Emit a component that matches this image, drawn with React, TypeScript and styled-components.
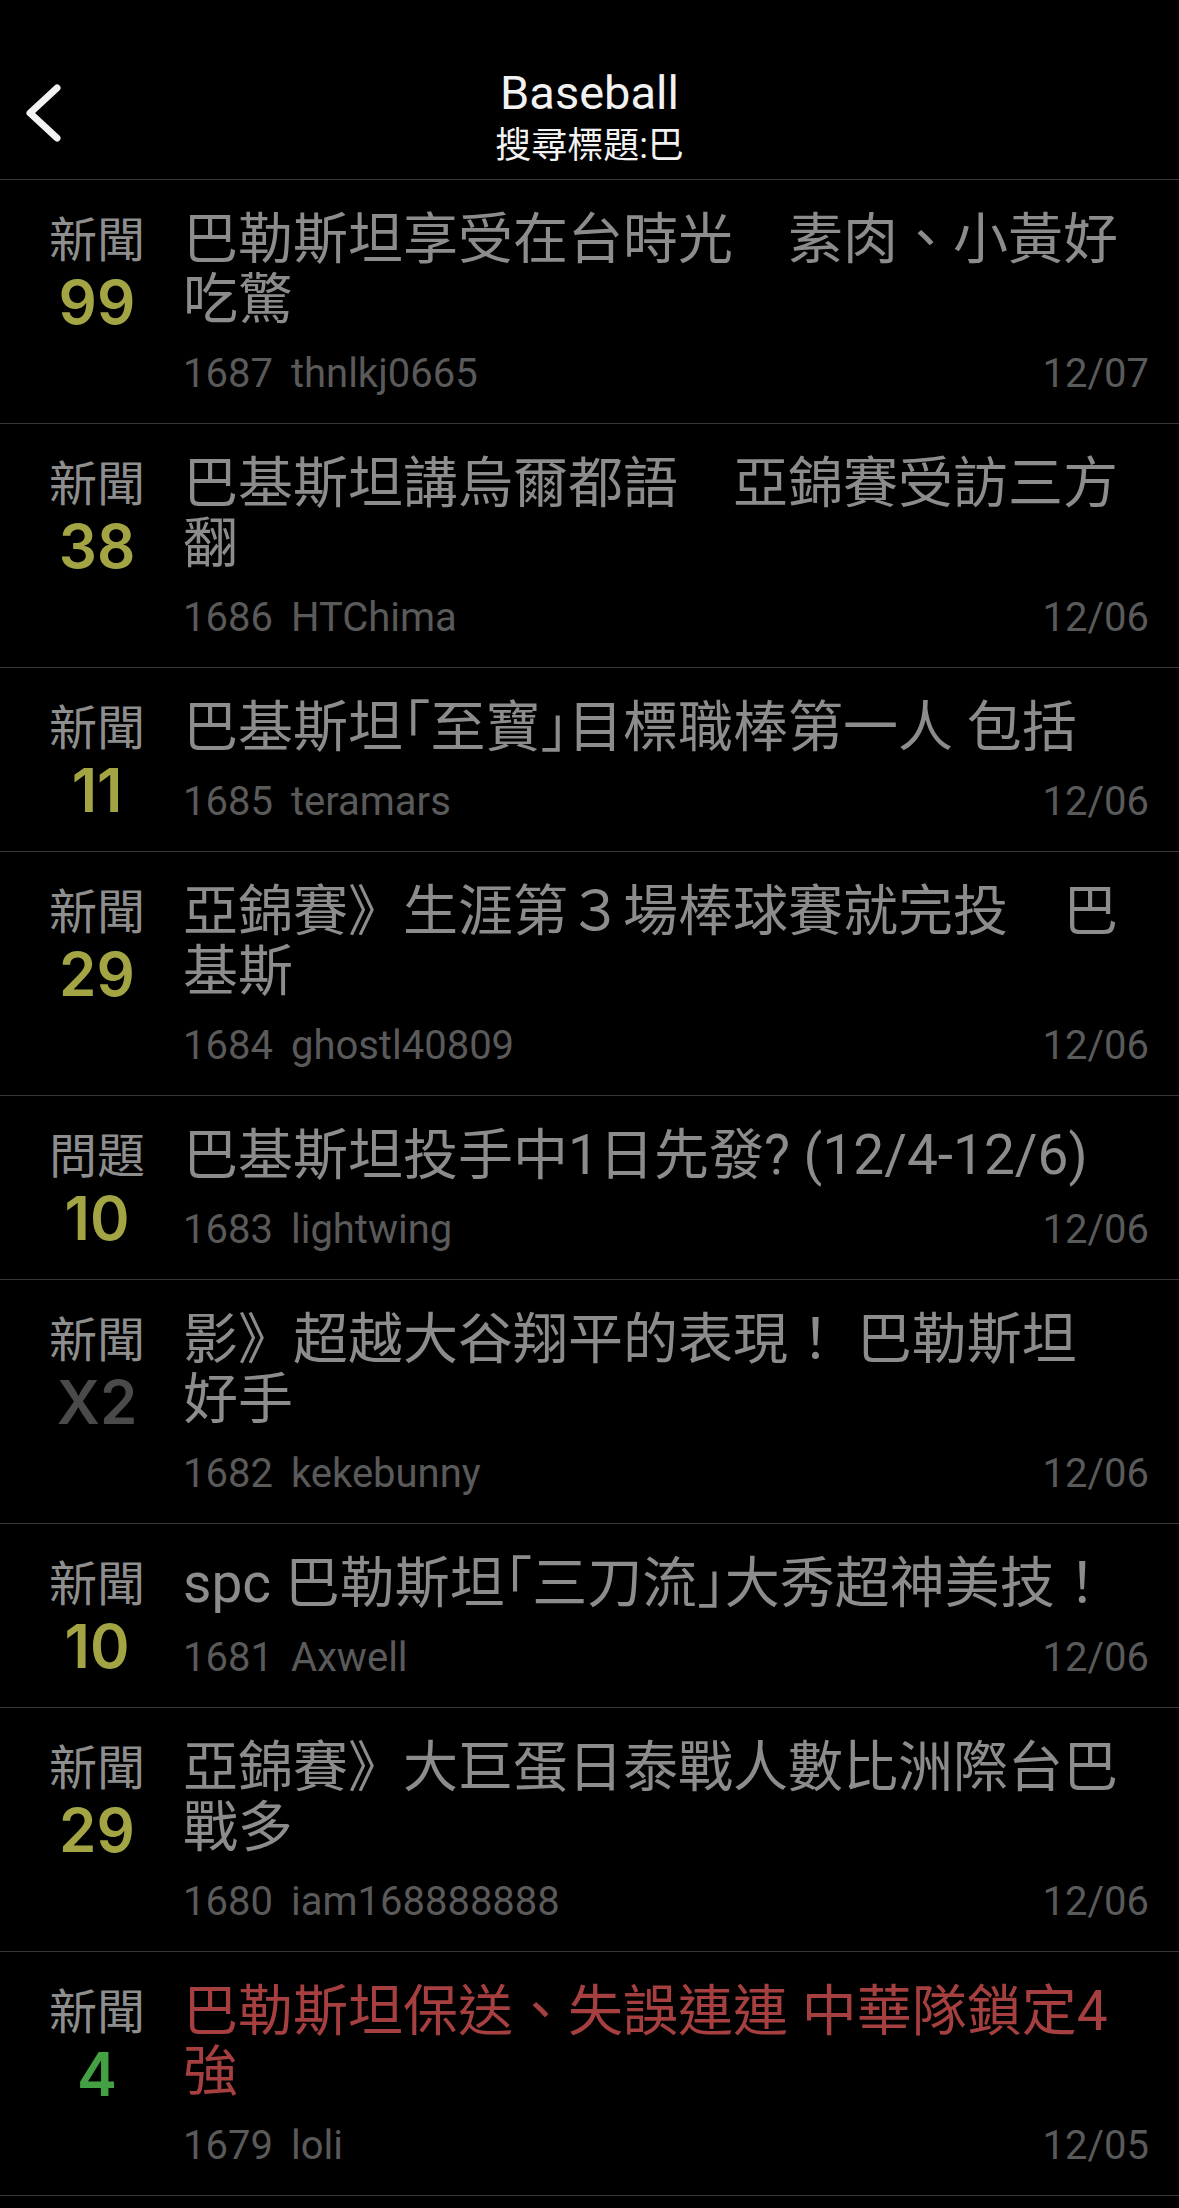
import React from "react";
import styled, { createGlobalStyle } from "styled-components";

const GlobalStyle = createGlobalStyle`
  html, body {
    margin: 0;
    padding: 0;
    background: #000;
  }
  body {
    font-family: Roboto, "Noto Sans CJK TC", sans-serif;
    -webkit-font-smoothing: antialiased;
  }
  #root {
    min-height: 2208px;
    background: #000;
  }
`;

const Page = styled.div`
  width: 1179px;
  min-height: 2208px;
  background: #000;
  overflow: hidden;
`;

const Header = styled.header`
  display: grid;
  grid-template-columns: 1fr auto 1fr;
  align-items: start;
  box-sizing: border-box;
  height: 180px;
  padding: 65px 22px 0 22px;
  border-bottom: 1px solid #363636;
`;

const BackButton = styled.button`
  justify-self: start;
  margin-top: 15px;
  padding: 0;
  border: none;
  background: none;
  width: 44px;
  height: 66px;
  display: flex;
`;

const TitleBlock = styled.div`
  display: flex;
  flex-direction: column;
  align-items: center;
  color: #f2f2f2;
`;

const BoardName = styled.div`
  font-size: 47px;
  line-height: 56px;
  font-weight: 400;
`;

const Subtitle = styled.div`
  margin-top: 3px;
  font-size: 36px;
  line-height: 44px;
`;

const Row = styled.div`
  display: flex;
  padding: 29px 30px 25px 40px;
  border-bottom: 1px solid #363636;
`;

const Side = styled.div`
  flex: none;
  width: 114px;
  margin-right: 29px;
  padding-top: 4px;
  display: flex;
  flex-direction: column;
  align-items: center;
`;

const Kind = styled.div`
  font-size: 48px;
  line-height: 56px;
  color: #8e8e8e;
  white-space: nowrap;
`;

type Tone = "yellow" | "green" | "dim";

const toneColor: Record<Tone, string> = {
  yellow: "#a3a443",
  green: "#43a043",
  dim: "#4a4a4a",
};

const Count = styled.div<{ $tone: Tone }>`
  font-family: Inter, Roboto, sans-serif;
  font-size: 60px;
  line-height: 66px;
  font-weight: 600;
  color: ${(p) => toneColor[p.$tone]};
`;

const Main = styled.div`
  flex: 1;
  min-width: 0;
  display: flex;
  flex-direction: column;
`;

const Title = styled.div<{ $hot?: boolean }>`
  font-size: 55px;
  line-height: 60px;
  padding-right: 24px;
  color: ${(p) => (p.$hot ? "#a63f3f" : "#8c8c8c")};
`;

const Punct = styled.span`
  font-feature-settings: "halt" 1;
`;

const Meta = styled.div`
  margin-top: 21px;
  display: flex;
  align-items: baseline;
  font-size: 40px;
  line-height: 48px;
  color: #5a5a5a;
  white-space: nowrap;
`;

const Author = styled.span`
  margin-left: 18px;
`;

const PostDate = styled.span`
  margin-left: auto;
`;

type Post = {
  kind: string;
  count: string;
  tone: Tone;
  title: string;
  no: string;
  author: string;
  date: string;
  hot?: boolean;
};

const posts: Post[] = [
  { kind: "新聞", count: "99", tone: "yellow", title: "巴勒斯坦享受在台時光　素肉、小黃好吃驚", no: "1687", author: "thnlkj0665", date: "12/07" },
  { kind: "新聞", count: "38", tone: "yellow", title: "巴基斯坦講烏爾都語　亞錦賽受訪三方翻", no: "1686", author: "HTChima", date: "12/06" },
  { kind: "新聞", count: "11", tone: "yellow", title: "巴基斯坦「至寶」目標職棒第一人 包括", no: "1685", author: "teramars", date: "12/06" },
  { kind: "新聞", count: "29", tone: "yellow", title: "亞錦賽》生涯第３場棒球賽就完投　巴基斯", no: "1684", author: "ghostl40809", date: "12/06" },
  { kind: "問題", count: "10", tone: "yellow", title: "巴基斯坦投手中1日先發? (12/4-12/6)", no: "1683", author: "lightwing", date: "12/06" },
  { kind: "新聞", count: "X2", tone: "dim", title: "影》超越大谷翔平的表現！ 巴勒斯坦好手", no: "1682", author: "kekebunny", date: "12/06" },
  { kind: "新聞", count: "10", tone: "yellow", title: "spc 巴勒斯坦「三刀流」大秀超神美技！", no: "1681", author: "Axwell", date: "12/06" },
  { kind: "新聞", count: "29", tone: "yellow", title: "亞錦賽》大巨蛋日泰戰人數比洲際台巴戰多", no: "1680", author: "iam168888888", date: "12/06" },
  { kind: "新聞", count: "4", tone: "green", title: "巴勒斯坦保送、失誤連連 中華隊鎖定4強", no: "1679", author: "loli", date: "12/05", hot: true },
];

const renderTitle = (t: string) =>
  t.split(/([「」])/).map((s, i) =>
    s === "「" || s === "」" ? <Punct key={i}>{s}</Punct> : <React.Fragment key={i}>{s}</React.Fragment>
  );

const Chevron = () => (
  <svg width="44" height="66" viewBox="0 0 44 66" fill="none">
    <polyline
      points="35,8 8,33 35,58"
      stroke="#f2f2f2"
      strokeWidth="7"
      strokeLinecap="round"
      strokeLinejoin="round"
    />
  </svg>
);

export default function App() {
  return (
    <Page>
      <GlobalStyle />
      <Header>
        <BackButton aria-label="back">
          <Chevron />
        </BackButton>
        <TitleBlock>
          <BoardName>Baseball</BoardName>
          <Subtitle>搜尋標題:巴</Subtitle>
        </TitleBlock>
        <div />
      </Header>
      {posts.map((p) => (
        <Row key={p.no}>
          <Side>
            <Kind>{p.kind}</Kind>
            <Count $tone={p.tone}>{p.count}</Count>
          </Side>
          <Main>
            <Title $hot={p.hot}>{renderTitle(p.title)}</Title>
            <Meta>
              <span>{p.no}</span>
              <Author>{p.author}</Author>
              <PostDate>{p.date}</PostDate>
            </Meta>
          </Main>
        </Row>
      ))}
    </Page>
  );
}
